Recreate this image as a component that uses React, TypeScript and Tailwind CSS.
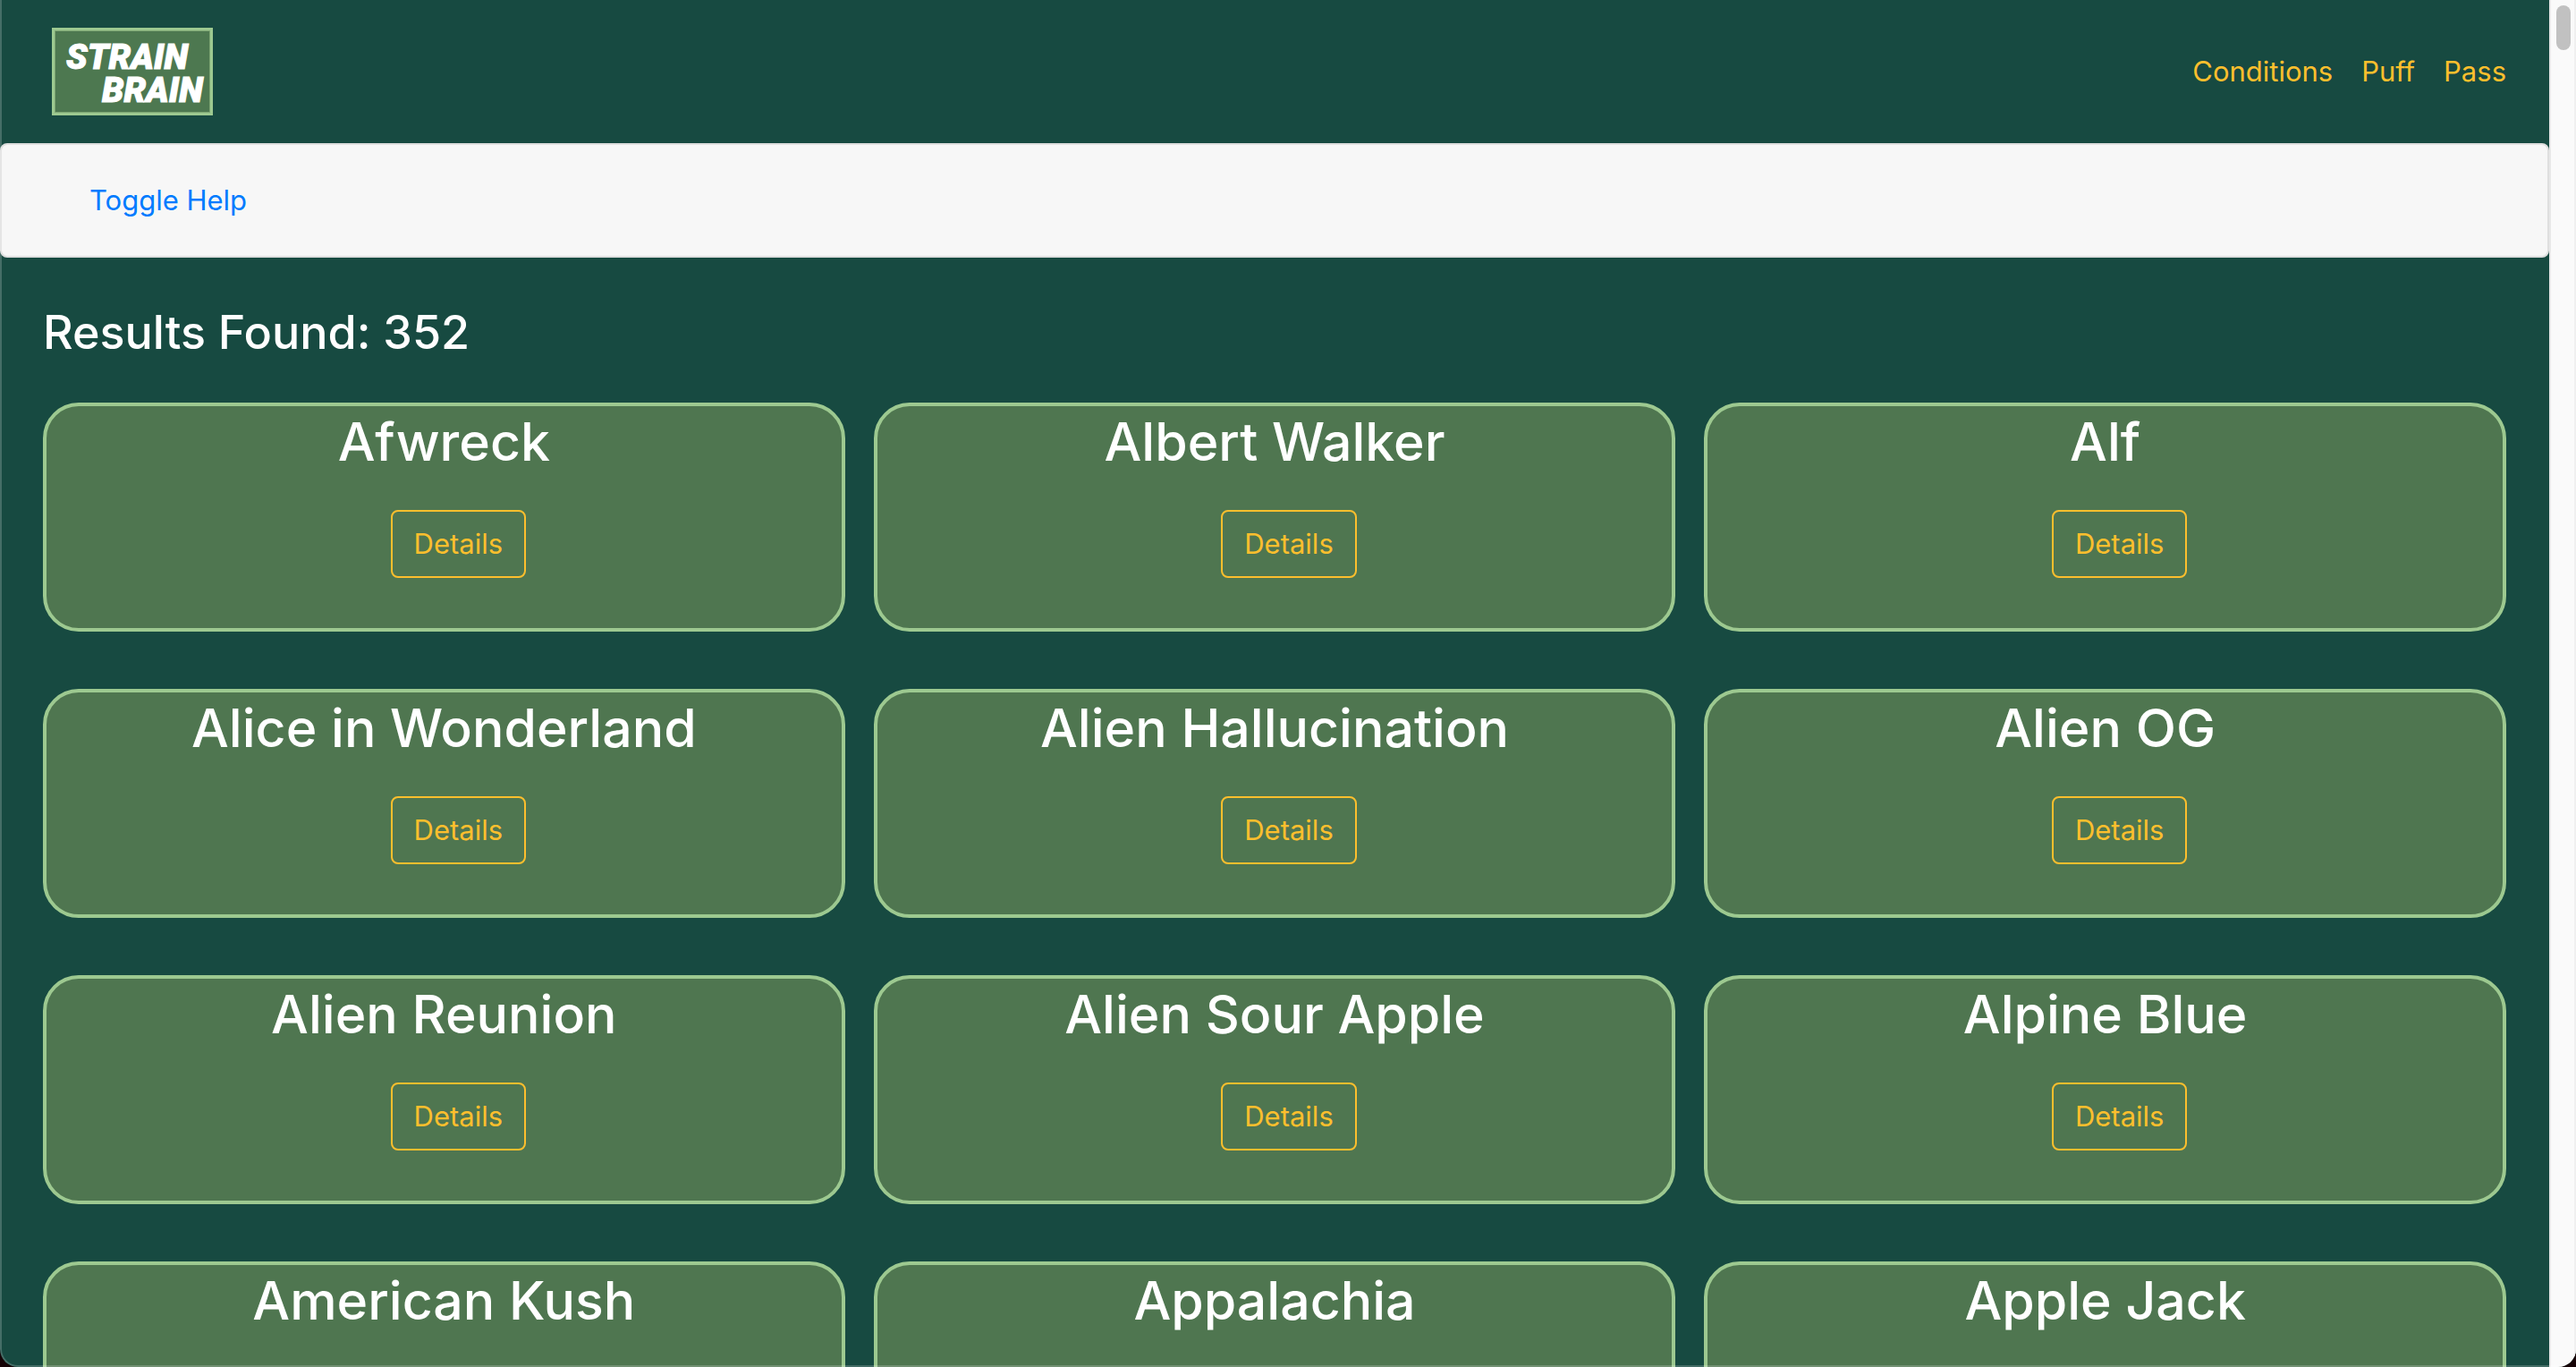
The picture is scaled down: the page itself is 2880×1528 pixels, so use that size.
const NAV_LINKS = ['Conditions', 'Puff', 'Pass']

const STRAINS = [
  'Afwreck',
  'Albert Walker',
  'Alf',
  'Alice in Wonderland',
  'Alien Hallucination',
  'Alien OG',
  'Alien Reunion',
  'Alien Sour Apple',
  'Alpine Blue',
  'American Kush',
  'Appalachia',
  'Apple Jack',
]

const TOTAL_RESULTS = 352

export default function App() {
  return (
    <div className="h-screen bg-[#160306]">
      <div className="relative flex h-full overflow-hidden rounded-b-[20px] bg-[#174a41] font-['Inter',sans-serif] text-[31px] leading-[48px]">
        <div className="min-w-0 flex-1">
          <Header />
          <main>
            <HelpBar />
            <section className="px-12 pt-12">
              <h2 className="text-[52px] leading-[72px] font-medium text-white">Results Found: {TOTAL_RESULTS}</h2>
              <div className="mt-[42px] grid grid-cols-3 gap-x-8 gap-y-16">
                {STRAINS.map(name => (
                  <StrainCard key={name} name={name} />
                ))}
              </div>
            </section>
          </main>
        </div>
        <ScrollTrack />
        <div className="pointer-events-none absolute inset-0 rounded-b-[20px] border-b-2 border-l-2 border-white/20" />
      </div>
    </div>
  )
}

function Header() {
  return (
    <header className="flex h-40 items-center justify-between pr-12 pl-[58px]">
      <a href="#home" aria-label="Strain Brain">
        <Logo />
      </a>
      <nav className="flex gap-8">
        {NAV_LINKS.map(label => (
          <a key={label} href={`#${label.toLowerCase()}`} className="text-[#fdbf2d]">
            {label}
          </a>
        ))}
      </nav>
    </header>
  )
}

function Logo() {
  return (
    <svg width="180" height="98" viewBox="0 0 180 98">
      <rect width="180" height="98" fill="#9dc990" />
      <rect x="3" y="3" width="174" height="92" fill="#7da573" />
      <rect x="4" y="4" width="172" height="90" fill="#4d7850" />
      <g
        fill="#fff"
        stroke="#fff"
        strokeWidth="1"
        fontFamily="Roboto, sans-serif"
        fontWeight="900"
        fontStyle="italic"
        fontSize="39"
      >
        <text x="16" y="46">STRAIN</text>
        <text x="56" y="83">BRAIN</text>
      </g>
    </svg>
  )
}

function HelpBar() {
  return (
    <div className="flex h-32 items-center rounded-lg border-2 border-[#dfdfdf] bg-[#f7f7f7] px-[98px]">
      <button type="button" className="text-[#007bff]">
        Toggle Help
      </button>
    </div>
  )
}

function StrainCard({ name }: { name: string }) {
  return (
    <article className="flex h-64 flex-col items-center rounded-[40px] border-4 border-[#9dc990] bg-[#4f7650]">
      <h3 className="text-[59px] leading-[80px] font-medium text-white">{name}</h3>
      <button type="button" className="mt-9 ml-8 rounded-lg border-2 border-[#fdbf2d] px-6 py-3 text-[#fdbf2d]">
        Details
      </button>
    </article>
  )
}

function ScrollTrack() {
  return (
    <div className="w-[30px] shrink-0 border-r-2 border-l-2 border-r-[#f0f0f0] border-l-[#e8e8e8] bg-[#fafafa] px-1.5 pt-1.5">
      <div className="h-[50px] w-4 rounded-full bg-[#c1c1c1]" />
    </div>
  )
}
